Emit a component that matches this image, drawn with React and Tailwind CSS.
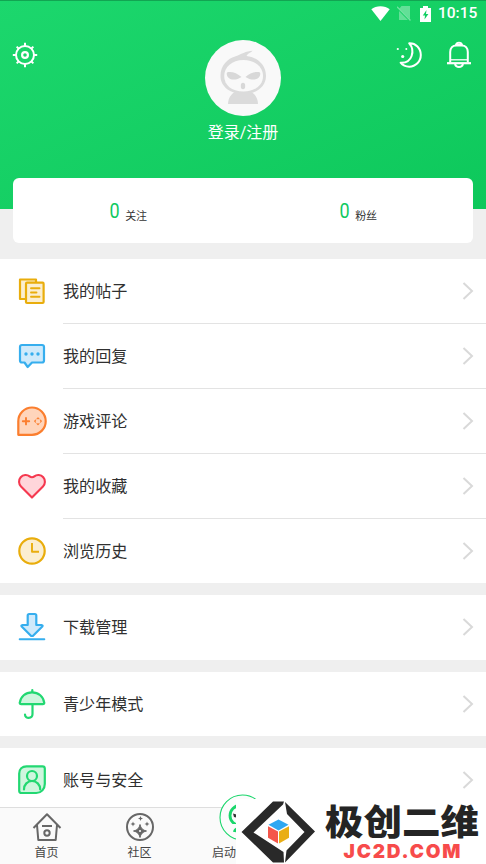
const GREEN = "#1ad66b";

function GearIcon() {
  return (
    <svg className="w-[26px] h-[26px]" viewBox="0 0 26 26" fill="none" stroke="#fff" strokeWidth="2">
      <circle cx="13" cy="13" r="9" />
      <circle cx="13" cy="13" r="2.9" strokeWidth="2.200" />
      {[0, 45, 90, 135, 180, 225, 270, 315].map((a) => (
        <path key={a} d={a % 90 ? "M13 1.2V4" : "M13 .8V4"} transform={`rotate(${a} 13 13)`} />
      ))}
    </svg>
  );
}

function MoonIcon() {
  return (
    <svg className="w-[28px] h-[28px]" viewBox="0 0 28 28" fill="none" stroke="#fff" strokeWidth="2" strokeLinejoin="round">
      <path d="M13.200 2.300C19.700 2 24.800 7.200 24.800 14c0 6.500-5.200 11.700-11.600 11.700-3.600 0-6.600-1.500-8.600-4 5 .3 9.300-1.800 11-6.700 1.700-4.900.5-9.500-2.400-12.700z" />
      <g fill="#fff" stroke="none">
        <circle cx="1.800" cy="8" r="1.100" />
        <circle cx="10.300" cy="8" r="1" />
        <circle cx="6.700" cy="15.500" r="1.600" />
      </g>
    </svg>
  );
}

function BellIcon() {
  return (
    <svg className="w-[26px] h-[28px]" viewBox="0 0 26 28" fill="none" stroke="#fff" strokeWidth="2" strokeLinejoin="round">
      <path d="M4.200 21.500V11c0-4 2.500-6.600 6-6.600h5.600c3.500 0 6 2.600 6 6.600v10.500" />
      <path d="M4.500 18.800h17" strokeWidth="1.300" />
      <path d="M1 22.200h24" strokeWidth="2.200" />
      <path d="M10 4c.3-1.500 1.500-2.200 3-2.200S15.700 2.500 16 4zM9 23c.5 2 2 3 4 3s3.500-1 4-3" />
    </svg>
  );
}

function StatusBar() {
  return (
    <div className="h-[26px] flex items-center justify-end pr-[9px] text-white border-t border-[#12a552]">
      <svg className="w-[19px] h-[15px]" viewBox="0 0 19 15" fill="#fff">
        <path d="M9.500 15L.3 3.300C5-.8 14-.8 18.700 3.300z" />
      </svg>
      <svg className="ml-[7px] w-[14px] h-[15px]" viewBox="0 0 14 15">
        <path d="M4.500 0H13v14H2V3z" fill="#fff" opacity=".33" />
        <path d="M0 1.500L13.500 15" stroke="#11cf62" strokeWidth="2.200" />
        <path d="M0 .8L13.500 14.500" stroke="#fff" strokeOpacity=".4" strokeWidth="1.300" />
      </svg>
      <svg className="ml-[9px] w-[11px] h-[16px]" viewBox="0 0 11 16">
        <path d="M0 2h3V0h5v2h3v14H0z" fill="#fff" />
        <path d="M6.500 4L2.800 9.500H5L4.500 13.500 8.400 8H6z" fill="#11cf62" />
      </svg>
      <span className="ml-[7px] mt-px w-[39px] text-[15.500px] font-medium leading-none font-[family-name:Roboto,sans-serif] whitespace-nowrap">
        10:15
      </span>
    </div>
  );
}

function Avatar() {
  return (
    <svg className="w-[76px] h-[76px]" viewBox="0 0 76 76">
      <circle cx="38" cy="38" r="38" fill="#f9f9f9" />
      <g fill="#dbdbdb">
        <path d="M15.500 36C15.500 25 23 18.500 30 16.500 36 14.500 41 11 47.500 10.800 46 13 43 13 41.500 16 53 17.500 61 25 61 36 61 47 51 54 38.500 54S15.500 47 15.500 36z" />
        <path d="M23 64c0-7 5-13 11-13h8c6 0 11 6 11 13z" />
      </g>
      <path d="M19.200 36C19.200 27 27 20 38.500 20S58 27 58 36s-7.500 15.500-19.500 15.500S19.200 45 19.200 36z" fill="#f9f9f9" />
      <g fill="#d8d8d8">
        <path d="M22 32.500C26 31 32 33 36.500 37c-5 3.500-11.500 3.300-13.700 0-1-1.600-1.400-3-.8-4.500zM55 32.500C51 31 45 33 40.500 37c5 3.500 11.500 3.300 13.700 0 1-1.600 1.400-3 .8-4.500z" />
        <ellipse cx="38" cy="46" rx="2.200" ry="3.200" />
      </g>
    </svg>
  );
}

function Chevron() {
  return (
    <svg className="w-3 h-[18px]" viewBox="0 0 12 18" fill="none" stroke="#d9d9d9" strokeWidth="2">
      <path d="M1.500 1l8.500 8-8.500 8" />
    </svg>
  );
}

const icons = {
  posts: (
    <g stroke="#e9ad0c" fill="#fbeed0">
      <path d="M20 6V3.500H4V23h6" />
      <rect x="10" y="6.700" width="17.600" height="20.300" rx="1" />
      <path d="M15 12.300h8.500M15 16.500h5.500M15 20.700h8.500" strokeWidth="1.900" />
    </g>
  ),
  replies: (
    <g stroke="#36aeee" fill="#cfeafb">
      <path d="M6 4h20q2 0 2 2v13.500q0 2-2 2H16L11.700 26 8.500 21.500H6q-2 0-2-2V6q0-2 2-2z" />
      <g fill="#36aeee" stroke="none">
        <circle cx="10" cy="13" r="1.700" />
        <circle cx="16" cy="13" r="1.700" />
        <circle cx="22" cy="13" r="1.700" />
      </g>
    </g>
  ),
  game: (
    <g stroke="#fb7e2e" fill="#ffd5bb">
      <path d="M2.300 28.800V15.200C2.300 7.500 8.500 1.500 16 1.500s13.700 6 13.700 13.700S23.500 28.800 16 28.800z" />
      <path d="M10 12v6.400M6.800 15.200h6.400" strokeWidth="1.900" />
      <g fill="none" strokeWidth="1.100">
        <path d="M21 12.800l1-1 1 1M21 17.600l1 1 1-1M19.600 14.200l-1 1 1 1M24.400 14.200l1 1-1 1" />
      </g>
    </g>
  ),
  heart: (
    <g stroke="#f5384f" fill="#ffd5da" transform="translate(.7 -.2) scale(.955)">
      <path d="M16 28L4.500 16.500C2 14 1.700 9.500 4.200 6.700 6.700 3.900 11 3.700 13.500 5.800 14.800 6.900 17.200 6.900 18.500 5.800 21 3.700 25.300 3.900 27.800 6.700 30.300 9.500 30 14 27.500 16.500z" />
    </g>
  ),
  history: (
    <g stroke="#e9ad0c" fill="#fbeed0">
      <circle cx="16" cy="16" r="12.700" />
      <path d="M16 8v8.700h7" strokeWidth="1.900" strokeLinecap="butt" />
    </g>
  ),
  download: (
    <g stroke="#36aeee" fill="#cfeafb">
      <path d="M13.200 3h5.600q1.500 0 1.500 1.500V14h5.200q1.700.3.800 1.500L16.800 25h-1.600L5.700 15.500q-.9-1.200.8-1.500h5.200V4.500Q11.700 3 13.200 3z" />
      <path d="M3.700 28.300h24.600" strokeWidth="2" />
    </g>
  ),
  teen: (
    <g stroke="#22d872" fill="#cef6de">
      <path d="M3.700 15C4.500 8.500 9.500 4.300 16 4.300S27.500 8.500 28.300 15q-.2 1.200-1.400 1.200H5.100q-1.200 0-1.400-1.200z" />
      <path d="M16.300 2v2" />
      <path d="M16.500 17v9c0 5-7.500 5-7.500.5" fill="none" />
    </g>
  ),
  account: (
    <g stroke="#22d872" fill="#cef6de">
      <path d="M10.500 2.300h16q2.300 0 2.300 2.300V20c0 5-3.500 9-8.500 9H5.500q-2.300 0-2.300-2.300V9.600c0-4.300 3-7.300 7.300-7.300z" />
      <circle cx="16" cy="12" r="5" />
      <path d="M8 25.500c0-5 3.500-8.500 8-8.500s8.200 3.500 8.200 8.500" />
    </g>
  ),
};

const groups = [
  [
    { icon: "posts", label: "我的帖子" },
    { icon: "replies", label: "我的回复" },
    { icon: "game", label: "游戏评论" },
    { icon: "heart", label: "我的收藏" },
    { icon: "history", label: "浏览历史", height: "h-16" },
  ],
  [{ icon: "download", label: "下载管理", height: "h-[64.600px]" }],
  [{ icon: "teen", label: "青少年模式", height: "h-[64.600px]" }],
  [{ icon: "account", label: "账号与安全", height: "h-[64px]" }],
];

function MenuRow({ icon, label, last, height = "h-[65px]" }) {
  return (
    <div className={`${height} flex items-center pl-4`}>
      <svg className="w-8 h-8 shrink-0" viewBox="0 0 32 32" strokeWidth="2.200" strokeLinecap="round" strokeLinejoin="round">
        {icons[icon]}
      </svg>
      <div
        className={`ml-[15px] h-full flex-1 flex items-center justify-between pr-3 ${
          last ? "" : "border-b border-[#e3e3e3]"
        }`}
      >
        <span className="pt-0.5 text-[16.100px] leading-6 text-[#303030]">{label}</span>
        <Chevron />
      </div>
    </div>
  );
}

function Stat({ label }) {
  return (
    <div className="flex-1 flex items-baseline justify-center gap-[5px] pt-[3px]">
      <span className="text-[20px] leading-6 -translate-y-px scale-x-90 text-[#10c95f] font-[family-name:Roboto,sans-serif]">0</span>
      <span className="text-[11px] translate-y-px text-[#333]">{label}</span>
    </div>
  );
}

function TabBar() {
  return (
    <nav className="relative h-[57px] shrink-0 flex bg-[#fafafa] border-t border-[#dedede] text-[12px] text-[#444]">
      <div className="w-[93px] flex flex-col items-center pt-1">
        <svg className="w-[30px] h-[30px]" viewBox="0 0 30 30" fill="none" stroke="#676767" strokeWidth="2">
          <path d="M1.500 16L15 2.200 28.500 16M5 13l1.300 15h17.400L25 13M10 14h10" strokeLinejoin="round" />
          <circle cx="15" cy="21" r="2.700" />
        </svg>
        <span className="leading-[18px] mt-0.5">首页</span>
      </div>
      <div className="w-[93px] flex flex-col items-center pt-1">
        <svg className="w-[30px] h-[30px]" viewBox="0 0 30 30" fill="#676767">
          <circle cx="15" cy="15" r="13" fill="none" stroke="#676767" strokeWidth="2" />
          <path d="M15 12.500q1 5.500 6.500 6.500-5.500 1-6.500 6.500-1-5.500-6.500-6.500 5.500-1 6.500-6.500z" strokeWidth="1" stroke="#676767" />
          <circle cx="15" cy="19" r="1.100" fill="#fafafa" />
          <path d="M15.500 4l.7 1.800 1.800.7-1.800.7-.7 1.800-.7-1.800-1.800-.7 1.800-.7zM8 9.500l.7 1.800 1.800.7-1.800.7L8 14.500l-.7-1.800-1.800-.7 1.800-.7zM22 9.500l.7 1.800 1.800.7-1.800.7-.7 1.800-.7-1.800-1.800-.7 1.800-.7z" />
        </svg>
        <span className="leading-[18px] mt-0.5">社区</span>
      </div>
      <div className="w-[50px] flex justify-end items-end pb-0.5">
        <span className="leading-[18px] whitespace-nowrap">启动</span>
      </div>
      <svg className="absolute left-[219px] -top-[14px] w-12 h-12" viewBox="0 0 48 48" fill="none" stroke={GREEN}>
        <circle cx="23.500" cy="23.500" r="22.500" fill="#fcfcfc" strokeWidth="1.100" />
        <circle cx="21" cy="21.500" r="10" strokeWidth="2.800" />
        <path d="M12 30h10v4H12z" fill="#fcfcfc" stroke="none" />
        <path d="M15.500 38c.3-2 1-3 3.500-3.300" strokeWidth="3" />
        <path d="M14 19.500l5 1.500v3l-4-1z" fill="#333" stroke="none" />
      </svg>
    </nav>
  );
}

function SiteBadge() {
  return (
    <div className="absolute left-[236px] bottom-0 right-0 h-[65px] bg-white flex">
      <svg className="ml-[5px] mt-[2px] w-[75px] h-[62px] shrink-0" viewBox="0 0 75 62">
        <path d="M.5 31L32 .5h11L42 3.500 12.500 31.500 42.500 51 43 61.500H32z" fill="#292929" />
        <path d="M44 1l30 29.500L44 61.500l1.500-12 18-18.500-17.500-18z" fill="#292929" />
        <path d="M37.500 18.500l10 5.200-10 5.700-10-5.700z" fill="#2ea7f2" />
        <path d="M27 25.200l10 5.300v12l-10-5.800z" fill="#f4564a" />
        <path d="M48 25.200l-10 5.300v12l10-5.800z" fill="#e9ae16" />
      </svg>
      <svg className="ml-[9px] w-[160px] h-[65px] shrink-0" viewBox="0 0 160 65">
        <text
          transform="translate(0 35.500) scale(1 .91)"
          fontSize="38.500"
          textLength="154"
          className="font-black font-[family-name:'Noto_Sans_CJK_SC',sans-serif]"
          fill="#242424"
        >
          极创二维
        </text>
        <text
          transform="translate(18.500 59)"
          fontSize="19"
          textLength="117"
          className="font-black font-[family-name:Inter,sans-serif]"
          fill="#f74b4b"
        >
          JC2D.COM
        </text>
      </svg>
    </div>
  );
}

export default function App() {
  return (
    <div className="relative w-[486px] h-[864px] overflow-hidden flex flex-col bg-[#efefef] font-[family-name:Roboto,'Noto_Sans_CJK_SC',sans-serif]">
      <header className="h-[209px] shrink-0 bg-linear-to-br from-[#1cd76d] to-[#0dc85b] text-white">
        <StatusBar />
        <div className="flex justify-between pl-3 pr-[14px] pt-[14px]">
          <div className="w-[100px] pt-[2px]">
            <GearIcon />
          </div>
          <div className="flex flex-col items-center">
            <Avatar />
            <span className="text-[16px] leading-6 mt-[5px]">登录/注册</span>
          </div>
          <div className="w-[98px] flex justify-end gap-[22px] pt-px">
            <MoonIcon />
            <BellIcon />
          </div>
        </div>
      </header>

      <div className="mx-[13px] -mt-[31px] h-[65px] shrink-0 rounded-md bg-white flex items-center">
        <Stat label="关注" />
        <Stat label="粉丝" />
      </div>

      <main className="mt-4 flex-1 min-h-0 overflow-hidden flex flex-col gap-3">
        {groups.map((rows) => (
          <section key={rows[0].icon} className="bg-white shrink-0">
            {rows.map((row, i) => (
              <MenuRow key={row.icon} {...row} last={i === rows.length - 1} />
            ))}
          </section>
        ))}
      </main>

      <TabBar />
      <SiteBadge />
    </div>
  );
}
